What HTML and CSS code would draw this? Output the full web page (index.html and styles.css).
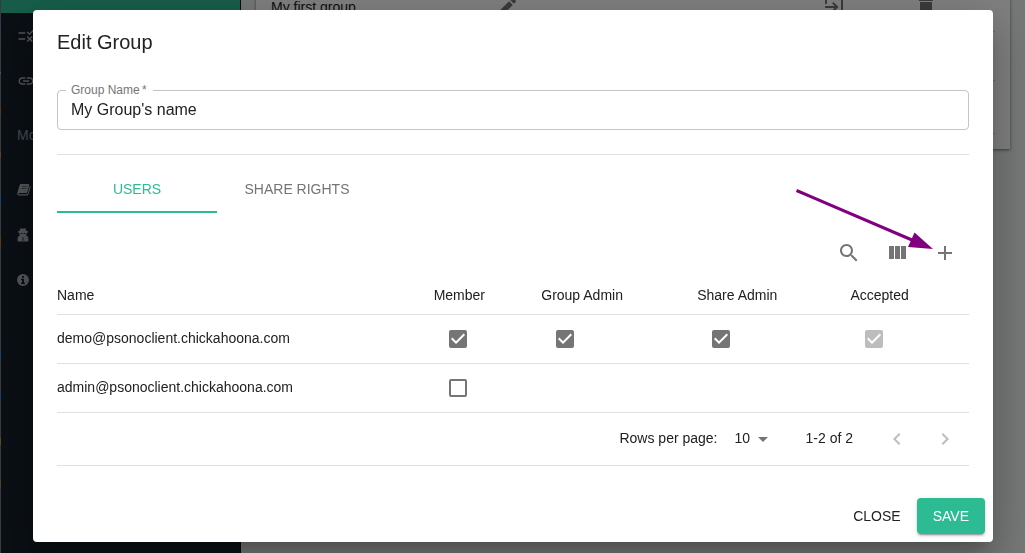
FILE: index.html
```html
<!DOCTYPE html>
<html lang="en">
<head>
<meta charset="utf-8">
<title>Edit Group</title>
<link rel="stylesheet" href="styles.css">
</head>
<body>
<div class="page">
  <div class="edge"></div>
  <aside class="sidebar">
    <div class="brand"></div>
    <nav class="menu">
      <a class="menu-item" href="#" aria-label="Rules"><svg width="18" height="18" viewBox="0 0 24 24"><path d="M16.54 11L13 7.46l1.41-1.41 2.12 2.12 4.24-4.24 1.41 1.41L16.54 11zM11 7H2v2h9V7zm10 6.41L19.59 12 17 14.59 14.41 12 13 13.41 15.59 16 13 18.59 14.41 20 17 17.41 19.59 20 21 18.59 18.41 16 21 13.41zM11 15H2v2h9v-2z"/></svg></a>
      <a class="menu-item" href="#" aria-label="Links"><svg width="18" height="18" viewBox="0 0 24 24"><path d="M3.9 12c0-1.71 1.39-3.1 3.1-3.1h4V7H7c-2.76 0-5 2.24-5 5s2.24 5 5 5h4v-1.9H7c-1.71 0-3.1-1.39-3.1-3.1zM8 13h8v-2H8v2zm9-6h-4v1.9h4c1.71 0 3.1 1.39 3.1 3.1s-1.39 3.1-3.1 3.1h-4V17h4c2.76 0 5-2.24 5-5s-2.24-5-5-5z"/></svg></a>
      <div class="menu-heading">More</div>
      <a class="menu-item" href="#" aria-label="Documentation"><svg width="14" height="14" viewBox="0 0 14 14"><path fill-rule="evenodd" d="M4.200 1h6.900c.9 0 1.300.6 1.100 1.300L10.300 9c-.2.700-.7 1-1.300 1H2.300c-.6 0-.9.300-.8.700.1.400.4.500.9.500h7.400c.4 0 .7-.2.800-.6l2.200-7.500c.7.300.9.900.7 1.500l-2 6.600c-.2.800-.8 1.300-1.500 1.300H2.200C.8 12.500-.1 11.500.3 10.300L2.600 2.300C2.900 1.500 3.400 1 4.200 1zM5 3.500l-.1.500h5l.1-.5zM4.400 5.500l-.1.500h5l.1-.5z"/></svg></a>
      <a class="menu-item" href="#" aria-label="Privacy"><svg width="12" height="14" viewBox="0 0 12 14"><path fill-rule="evenodd" d="M3.400.6c.6-.7 1.300-.2 2.600.2 1.300-.4 2-.9 2.600-.2l.7 2.200 1.900.8v.7l-1.600.6c.1 1.300-.2 2-.7 2.700l1.300.4c1 .9 1.300 2.500 1.300 4.200 0 .9-.6 1.400-1.500 1.400H2c-.9 0-1.500-.5-1.500-1.400 0-1.700.3-3.300 1.300-4.200l1.300-.4c-.5-.7-.8-1.400-.7-2.700L.8 4.300v-.7l1.900-.8zM3.800 5v.9h1.600V5zM6.600 5v.9h1.600V5zM4.500 8.700l.9 1-.4 2.800h.6V9.200zM7.500 8.700l-1.100.5v3.300H7l-.4-2.800z"/></svg></a>
      <a class="menu-item" href="#" aria-label="About"><svg width="12" height="12" viewBox="0 0 12 12"><path fill-rule="evenodd" d="M6 0a6 6 0 1 1 0 12A6 6 0 0 1 6 0zM5 2v1.700h2V2zM4 4.700v1.200h1v2.800H4V10h4V8.700H7v-4z"/></svg></a>
    </nav>
  </aside>
  <main class="main">
    <section class="paper">
      <div class="group-row">
        <span>My first group</span>
        <svg width="24" height="24" viewBox="0 0 24 24"><path d="M3 17.250V21h3.750L17.810 9.940l-3.750-3.750L3 17.250zM20.710 7.040c.39-.39.39-1.020 0-1.410l-2.340-2.340c-.39-.39-1.020-.39-1.410 0l-1.830 1.830 3.750 3.750 1.830-1.830z"/></svg>
        <svg width="24" height="24" viewBox="0 0 24 24"><path d="M10.090 15.590L11.500 17l5-5-5-5-1.410 1.410L12.670 11H3v2h9.670l-2.580 2.590zM19 3H5c-1.110 0-2 .9-2 2v4h2V5h14v14H5v-4H3v4c0 1.100.89 2 2 2h14c1.100 0 2-.9 2-2V5c0-1.100-.9-2-2-2z"/></svg>
        <svg width="24" height="24" viewBox="0 0 24 24"><path d="M6 19c0 1.100.9 2 2 2h8c1.100 0 2-.9 2-2V7H6v12zM19 4h-3.500l-1-1h-5l-1 1H5v2h14V4z"/></svg>
      </div>
      <div class="group-row"></div>
      <div class="group-footer"></div>
    </section>
  </main>
</div>

<div class="backdrop">
  <form class="dialog" role="dialog" aria-labelledby="dialog-title">
    <h2 class="dialog-title" id="dialog-title">Edit Group</h2>
    <div class="dialog-content">
      <div class="field">
        <label class="field-label" for="group-name">Group Name&thinsp;*</label>
        <input class="field-input" id="group-name" type="text" value="My Group's name" required>
      </div>
      <hr class="divider">
      <div class="tabs" role="tablist">
        <button class="tab tab-active" type="button" role="tab" aria-selected="true">USERS</button>
        <button class="tab" type="button" role="tab" aria-selected="false">SHARE RIGHTS</button>
      </div>
      <div class="toolbar">
        <button class="icon-button" type="button" aria-label="Search"><svg width="24" height="24" viewBox="0 0 24 24"><path d="M15.500 14h-.79l-.28-.27C15.410 12.590 16 11.110 16 9.500 16 5.910 13.090 3 9.500 3S3 5.910 3 9.500 5.910 16 9.500 16c1.610 0 3.090-.59 4.230-1.570l.27.28v.79l5 4.990L20.490 19l-4.990-5zm-6 0C7.010 14 5 11.990 5 9.500S7.010 5 9.500 5 14 7.010 14 9.500 11.990 14 9.500 14z"/></svg></button>
        <button class="icon-button" type="button" aria-label="View columns"><svg width="24" height="24" viewBox="0 0 24 24"><path d="M4 5h5v13H4zM10 5h5v13h-5zM16 5h5v13h-5z"/></svg></button>
        <button class="icon-button" type="button" aria-label="Add user"><svg width="24" height="24" viewBox="0 0 24 24"><path d="M19 13h-6v6h-2v-6H5v-2h6V5h2v6h6v2z"/></svg></button>
      </div>
      <table class="users">
        <colgroup><col class="col-name"><col class="col-member"><col class="col-group"><col class="col-share"><col></colgroup>
        <thead>
          <tr><th>Name</th><th>Member</th><th>Group Admin</th><th>Share Admin</th><th>Accepted</th></tr>
        </thead>
        <tbody>
          <tr>
            <td class="name">demo@psonoclient.chickahoona.com</td>
            <td><input class="check" type="checkbox" aria-label="Member" checked></td>
            <td><input class="check" type="checkbox" aria-label="Group Admin" checked></td>
            <td><input class="check" type="checkbox" aria-label="Share Admin" checked></td>
            <td><input class="check" type="checkbox" aria-label="Accepted" checked disabled></td>
          </tr>
          <tr>
            <td class="name">admin@psonoclient.chickahoona.com</td>
            <td><input class="check" type="checkbox" aria-label="Member"></td>
            <td></td><td></td><td></td>
          </tr>
        </tbody>
      </table>
      <div class="pagination">
        <label class="rows-label" for="rows">Rows per page:</label>
        <select class="rows" id="rows"><option>10</option></select>
        <span class="range">1-2 of 2</span>
        <button class="icon-button" type="button" aria-label="Previous page" disabled><svg width="24" height="24" viewBox="0 0 24 24"><path d="M15.410 7.410L14 6l-6 6 6 6 1.410-1.410L10.830 12z"/></svg></button>
        <button class="icon-button" type="button" aria-label="Next page" disabled><svg width="24" height="24" viewBox="0 0 24 24"><path d="M10 6L8.590 7.410 13.170 12l-4.580 4.590L10 18l6-6z"/></svg></button>
      </div>
    </div>
    <div class="actions">
      <button class="button" type="button">CLOSE</button>
      <button class="button button-primary" type="submit">SAVE</button>
    </div>
    <svg class="pointer" width="140" height="70" viewBox="0 0 140 70"><path d="M1.500 5.500L117 55" stroke="#800080" stroke-width="3"/><path d="M119.500 47.500L138 64L113 62z" fill="#800080"/></svg>
  </form>
</div>
</body>
</html>
```
FILE: styles.css
```css
* {
  box-sizing: border-box;
}

body {
  margin: 0;
  font: 14px/20px "Liberation Sans", Arial, sans-serif;
  color: #212121;
  overflow: hidden;
}

button,
input,
select {
  font: inherit;
  color: inherit;
}

svg {
  display: block;
  fill: currentColor;
}

.page {
  display: flex;
  height: 100vh;
  background: #ebf0ee;
}

.edge {
  width: 1px;
  background: linear-gradient(#777 18px, #57a 18px 25px, #777 25px 72px, #7bd 72px 74px, #777 74px 108px, #b73 108px 114px, #777 114px 152px, #c84 152px 158px, #777 158px 196px, #48c 196px 206px, #777 206px 238px, #c71 238px 246px, #777 246px 350px, #48c 350px 360px, #777 360px 392px, #47c 392px 399px, #777 399px 438px, #b95 438px 445px, #777 445px 480px, #a85 480px 488px, #777 488px);
}

.sidebar {
  width: 240px;
  background: #151f2b;
  border-right: 1px solid #0a0f1c;
}

.brand {
  height: 13px;
  background: #2dbb93;
}

.menu {
  display: flex;
  flex-direction: column;
  color: #a8abae;
}

.menu-item {
  display: flex;
  align-items: center;
  height: 45px;
  padding-left: 16px;
  color: inherit;
}

.menu-heading {
  padding: 22px 16px;
  color: #8b929c;
}

.main {
  flex: 1;
  padding: 0 15px;
}

.paper {
  margin-top: -17px;
  padding: 0 15px 15px;
  background: #fff;
  box-shadow: 0 1px 3px rgba(0, 0, 0, 0.5);
}

.group-row {
  display: grid;
  grid-template-columns: 224fr 327fr 92fr 81fr;
  align-items: center;
  height: 49px;
  border-bottom: 1px solid #ccc;
}

.group-row svg {
  color: #757575;
}

.group-footer {
  height: 53px;
  border-bottom: 1px solid #ccc;
}

.backdrop {
  position: fixed;
  inset: 0;
  display: flex;
  align-items: flex-start;
  justify-content: center;
  padding: 10px 32px 10px 33px;
  background: rgba(0, 0, 0, 0.5);
}

.dialog {
  position: relative;
  width: 100%;
  max-width: 960px;
  background: #fff;
  border-radius: 4px;
  box-shadow: 0 11px 15px -7px rgba(0, 0, 0, 0.2), 0 24px 38px 3px rgba(0, 0, 0, 0.14), 0 9px 46px 8px rgba(0, 0, 0, 0.12);
}

.dialog-title {
  margin: 0;
  padding: 16px 24px;
  font-size: 20px;
  font-weight: 400;
  line-height: 32px;
}

.dialog-content {
  padding: 16px 24px 24px;
}

.field {
  position: relative;
}

.field-label {
  position: absolute;
  top: -8px;
  left: 9px;
  padding: 0 6px 0 5px;
  font-size: 12px;
  line-height: 16px;
  color: #757575;
  background: #fff;
}

.field-input {
  display: block;
  width: 100%;
  height: 40px;
  padding: 0 13px;
  font-size: 16px;
  border: 1px solid #c4c4c4;
  border-radius: 4px;
  background: none;
}

.divider {
  margin: 24px 0 10px;
  border: 0;
  border-top: 1px solid #e0e0e0;
}

.tabs {
  display: flex;
}

.tab {
  width: 160px;
  height: 48px;
  padding: 2px 0 0;
  border: 0;
  border-bottom: 2px solid transparent;
  background: none;
  color: #757575;
}

.tab-active {
  color: #2dbb93;
  border-color: #2dbb93;
}

.toolbar {
  display: flex;
  justify-content: flex-end;
  padding-top: 16px;
}

.icon-button {
  display: grid;
  place-items: center;
  width: 48px;
  height: 48px;
  padding: 0;
  border: 0;
  background: none;
  color: #757575;
}

.icon-button:disabled {
  color: #bdbdbd;
}

.users {
  width: 100%;
  table-layout: fixed;
  border-collapse: separate;
  border-spacing: 0;
}

.col-name { width: 41.3%; }
.col-member { width: 11.8%; }
.col-group { width: 17.1%; }
.col-share { width: 16.8%; }

.users th,
.users td {
  padding: 0;
  height: 49px;
  text-align: left;
  font-weight: 400;
  border-bottom: 1px solid #e0e0e0;
}

.users th {
  height: 38px;
  padding-bottom: 2px;
}

.users .name {
  padding-bottom: 2px;
}

.check {
  appearance: none;
  display: block;
  width: 18px;
  height: 18px;
  margin: 0 0 0 15px;
  border: 2px solid #757575;
  border-radius: 2px;
}

.check:checked {
  border: 0;
  background: #757575 url("data:image/svg+xml,%3Csvg xmlns='http://www.w3.org/2000/svg' viewBox='3 3 18 18'%3E%3Cpath fill='%23fff' d='M10 17l-5-5 1.410-1.410L10 14.170l7.590-7.590L19 8z'/%3E%3C/svg%3E");
}

.check:disabled {
  background-color: #bdbdbd;
}

.pagination {
  display: flex;
  align-items: center;
  justify-content: flex-end;
  height: 53px;
  border-bottom: 1px solid #e0e0e0;
}

.rows-label,
.range {
  padding-bottom: 2px;
}

.rows {
  appearance: none;
  height: 24px;
  margin: 0 31px 0 9px;
  padding: 0 24px 2px 8px;
  border: 0;
  background: url("data:image/svg+xml,%3Csvg xmlns='http://www.w3.org/2000/svg' viewBox='0 0 24 24'%3E%3Cpath fill='%23757575' d='M7 10l5 5 5-5z'/%3E%3C/svg%3E") right center / 24px 24px no-repeat;
}

.range {
  margin-right: 20px;
}

.actions {
  display: flex;
  justify-content: flex-end;
  gap: 8px;
  padding: 8px;
}

.button {
  height: 36px;
  padding: 0 8px;
  border: 0;
  border-radius: 4px;
  background: none;
}

.button-primary {
  padding: 0 16px;
  color: #fff;
  background: #2dbb93;
  box-shadow: 0 3px 1px -2px rgba(0, 0, 0, 0.2), 0 2px 2px rgba(0, 0, 0, 0.14), 0 1px 5px rgba(0, 0, 0, 0.12);
}

.pointer {
  position: absolute;
  top: 175px;
  right: 58px;
  pointer-events: none;
}
```
